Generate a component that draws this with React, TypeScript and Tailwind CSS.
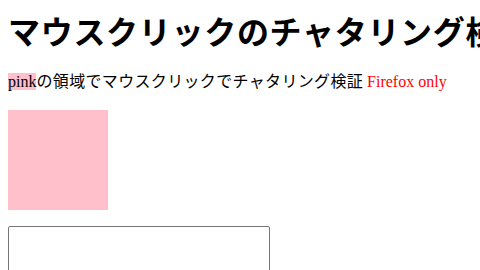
export default function App() {
  return (
    <div
      className="p-2 text-black bg-white overflow-hidden w-[480px] h-[270px]"
      style={{ fontFamily: '"Liberation Serif", "Noto Sans CJK JP", serif' }}
    >
      <h1 className="text-[32px] font-bold whitespace-nowrap mt-[8.5px] mb-[20.5px] leading-[33px] tracking-[0.7px]">
        マウスクリックのチャタリング検証
      </h1>
      <p className="text-[16px] my-4 whitespace-nowrap">
        <span className="bg-[pink]">pink</span>
        <span className="tracking-[0.34px]">の領域でマウスクリックでチャタリング検証</span>{" "}
        <span className="text-[red]">Firefox only</span>
      </p>
      <div className="w-[100px] h-[100px] bg-[pink]" />
      <textarea className="block mt-4 w-[262px] h-[60px] border border-[#767676] rounded-[2px]" />
    </div>
  );
}
